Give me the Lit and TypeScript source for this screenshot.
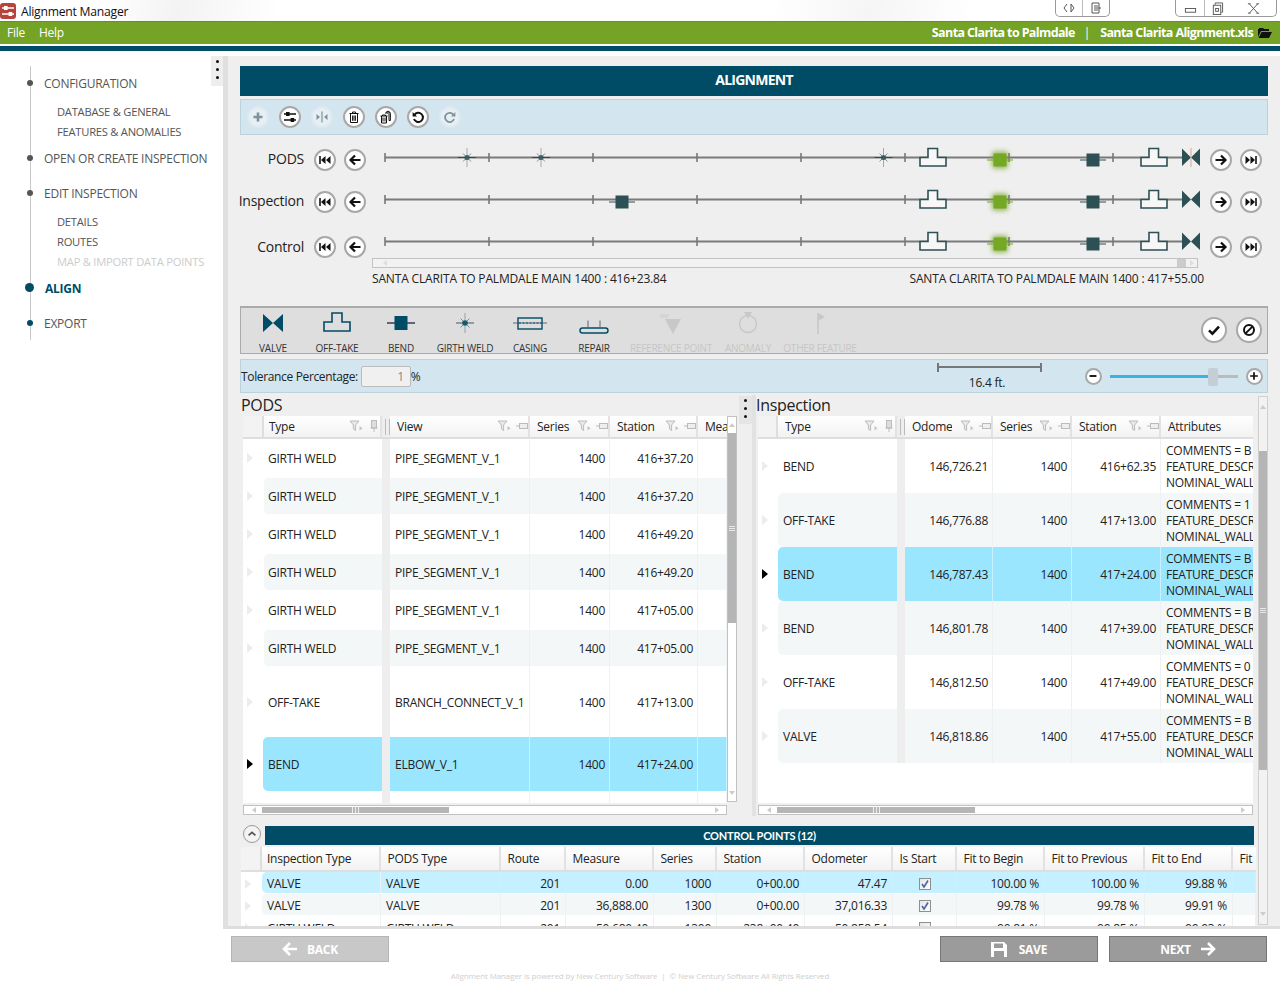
import { LitElement, html, css, svg } from "lit";
import { customElement } from "lit/decorators.js";

const DK = "#2d5055";
const TEAL = "#004c66";

const ticks = [385, 489, 593, 697, 801, 905, 1009, 1113];

const weld = (x: number, y: number, c = DK) => svg`
  <line x1=${x} y1=${y - 9.5} x2=${x} y2=${y + 9.5} stroke="#a8a8a6" stroke-width="1"/>
  <line x1=${x - 9} y1=${y} x2=${x + 9} y2=${y} stroke=${c} stroke-width="1"/>
  <line x1=${x - 4} y1=${y - 4} x2=${x + 4} y2=${y + 4} stroke="#7d9299" stroke-width="1"/>
  <line x1=${x + 4} y1=${y - 4} x2=${x - 4} y2=${y + 4} stroke="#7d9299" stroke-width="1"/>
  <circle cx=${x} cy=${y} r="2.6" fill=${c} opacity=".8"/>`;
const offtake = (x: number, c = DK) => svg`
  <path d="M${x} 24H${x + 26}V15.5H${x + 17.5}V6.5H${x + 8}V15.5H${x}Z" fill="#f7f7f7" stroke=${c} stroke-width="1.6"/>`;
const bend = (x: number, y = 18, c = "#2d5055") => svg`
  <line x1=${x - 13} y1=${y} x2=${x + 13} y2=${y} stroke=${c} stroke-width="1"/>
  <rect x=${x - 6.5} y=${y - 6.5} width="13" height="13" fill=${c}/>`;
const green = (x: number) => svg`
  <rect x=${x - 8} y="9.5" width="16" height="17" rx="3" fill="#75a325" opacity=".75" filter="url(#glow)"/>
  <line x1=${x - 13} y1="18" x2=${x + 13} y2="18" stroke="#86b33a" stroke-width="1.2"/>
  <rect x=${x - 6.5} y="11.5" width="13" height="13" fill="#75a825"/>`;
const valve = (x: number, c = DK) => svg`
  <path d="M${x} 6.5V24L${x + 9} 15.5L${x + 18} 24V6.5L${x + 9} 15.5Z" fill=${c}/>`;

const track = (extra: unknown) => html`<svg class="track" viewBox="378 0 826 30" width="826" height="30">
  <defs><filter id="glow" x="-60%" y="-60%" width="220%" height="220%"><feGaussianBlur stdDeviation="2.4"/></filter></defs>
  <line x1="385" y1="15.5" x2="1182" y2="15.5" stroke="#7a7a7a" stroke-width="2"/>
  ${ticks.map((t) => svg`<line x1=${t} y1="11" x2=${t} y2="20" stroke="#777" stroke-width="1.6"/>`)}
  ${offtake(920)}${green(1000)}${bend(1093)}${offtake(1141)}${valve(1182)}
  ${extra}
</svg>`;

const ic = (body: unknown, size = 14, color = "currentColor") =>
  html`<svg width=${size} height=${size} viewBox="0 0 14 14" fill="none" stroke=${color} stroke-width="1.4">${body}</svg>`;

const icons: Record<string, unknown> = {
  plus: svg`<path d="M7 2.5V11.5M2.5 7H11.5" stroke-width="2.6"/>`,
  sliders: svg`<path d="M1 4H13M1 10H13" stroke-width="1.4"/><rect x="3" y="2" width="3.6" height="4" fill="currentColor" stroke="none"/><rect x="7.6" y="8" width="3.6" height="4" fill="currentColor" stroke="none"/>`,
  split: svg`<path d="M7 1.5V12.5" stroke-width="1.2"/><path d="M1.5 4V10L5 7ZM12.5 4V10L9 7Z" fill="currentColor" stroke="none"/>`,
  trash: svg`<path d="M2.5 3.5H11.5M5.5 3.5V2H8.5V3.5M3.5 3.5V12.5H10.5V3.5M5.6 5.5V10.8M7 5.5V10.8M8.4 5.5V10.8" stroke-width="1"/>`,
  trash2: svg`<path d="M1.5 6H8.5M3.5 6V5H6.5V6M2.5 6V13H7.5V6M4 7.5V11.5M6 7.5V11.5" stroke-width="1"/><path d="M6 3H12M7.8 3V1.4H10.2V3M10 4V10.5H11.4V3.5" stroke-width="1"/>`,
  undo: svg`<path d="M3.4 5A4.6 4.6 0 1 1 3 9" stroke-width="2"/><path d="M1.6 2V6.4H6Z" fill="currentColor" stroke="none"/>`,
  redo: svg`<path d="M10.6 5A4.6 4.6 0 1 0 11 9" stroke-width="1.8"/><path d="M12.4 2V6.4H8Z" fill="currentColor" stroke="none"/>`,
  first: svg`<path d="M2 3V11" stroke-width="1.6"/><path d="M7.5 3V11L3 7ZM12.5 3V11L8 7Z" fill="currentColor" stroke="none"/>`,
  last: svg`<path d="M12 3V11" stroke-width="1.6"/><path d="M6.5 3V11L11 7ZM1.5 3V11L6 7Z" fill="currentColor" stroke="none"/>`,
  left: svg`<path d="M7 2.5L2.5 7L7 11.5M2.5 7H12.5" stroke-width="2.2"/>`,
  right: svg`<path d="M7 2.5L11.5 7L7 11.5M11.5 7H1.5" stroke-width="2.2"/>`,
  check: svg`<path d="M2 7.4L5.4 10.6L12 3.6" stroke-width="2.6"/>`,
  ban: svg`<circle cx="7" cy="7" r="5" stroke-width="2"/><path d="M3.6 10.4L10.4 3.6" stroke-width="2"/>`,
  minus: svg`<path d="M3 7H11" stroke-width="2.2"/>`,
  plusThin: svg`<path d="M7 2.5V11.5M2.5 7H11.5" stroke-width="2"/>`,
  up: svg`<path d="M3 8.6L7 5L11 8.6" stroke-width="2"/>`,
};

const cb = (name: string, cls = "") => html`<span class="cb ${cls}">${ic(icons[name])}</span>`;

const filterIc = html`<svg class="hi" width="14" height="12" viewBox="0 0 14 12"><path d="M1 1H10L6.6 5V10.5L4.4 9V5Z" fill="#e9e9e9" stroke="#bbb"/><path d="M10.5 6L13.5 8.2L10.5 10.5Z" fill="#c4c4c4"/></svg>`;
const pinH = html`<svg class="hi" width="12" height="12" viewBox="0 0 12 12"><path d="M0 6H3.5" stroke="#bbb"/><rect x="3.5" y="3.5" width="8" height="5" fill="#eee" stroke="#bbb"/></svg>`;
const pinV = html`<svg class="hi" width="12" height="12" viewBox="0 0 12 12"><rect x="3.5" y="0.5" width="5" height="7.5" fill="#ddd" stroke="#bbb"/><path d="M6 8V12M2.5 8H9.5" stroke="#bbb"/></svg>`;

const rowMark = (sel: boolean) =>
  html`<svg width="6" height="10" viewBox="0 0 6 10"><path d="M0 0L6 5L0 10Z" fill=${sel ? "#000" : "#ececec"}/></svg>`;

const vscroll = (thumbH: number, thumbTop: number) => html`<div class="vs">
  <svg class="sa" width="8" height="6" viewBox="0 0 8 6"><path d="M4 1L7 5H1Z" fill="#ccc"/></svg>
  <div class="vt" style="margin-top:${thumbTop}px;height:${thumbH}px"><i></i><i></i><i></i></div>
  <span class="fill"></span>
  <svg class="sa" width="8" height="6" viewBox="0 0 8 6"><path d="M4 5L7 1H1Z" fill="#ccc"/></svg>
</div>`;

const hscroll = (w: number, t: number, cls = "") => html`<div class="hs ${cls}">
  <svg class="ha" width="6" height="8" viewBox="0 0 6 8"><path d="M1 4L5 1V7Z" fill="#ccc"/></svg>
  <div class="ht" style="width:${w}px;margin-left:${t}px"><i></i><i></i><i></i></div>
  <span class="fill"></span>
  <svg class="ha" width="6" height="8" viewBox="0 0 6 8"><path d="M5 4L1 1V7Z" fill="#ccc"/></svg>
</div>`;

const LCOLS = "21px 118px 8px 140px 80px 88px 29px";
const RCOLS = "20px 119px 8px 88px 79px 89px 92px";
const CCOLS = "21px 119px 120px 65px 88px 63px 88px 88px 64px 88px 100px 88px 23px";

const leftRows = [
  ["GIRTH WELD", "PIPE_SEGMENT_V_1", "1400", "416+37.20", 38],
  ["GIRTH WELD", "PIPE_SEGMENT_V_1", "1400", "416+37.20", 38],
  ["GIRTH WELD", "PIPE_SEGMENT_V_1", "1400", "416+49.20", 38],
  ["GIRTH WELD", "PIPE_SEGMENT_V_1", "1400", "416+49.20", 38],
  ["GIRTH WELD", "PIPE_SEGMENT_V_1", "1400", "417+05.00", 38],
  ["GIRTH WELD", "PIPE_SEGMENT_V_1", "1400", "417+05.00", 38],
  ["OFF-TAKE", "BRANCH_CONNECT_V_1", "1400", "417+13.00", 70],
  ["BEND", "ELBOW_V_1", "1400", "417+24.00", 54],
];
const rightRows = [
  ["BEND", "146,726.21", "1400", "416+62.35", "B"],
  ["OFF-TAKE", "146,776.88", "1400", "417+13.00", "1"],
  ["BEND", "146,787.43", "1400", "417+24.00", "B"],
  ["BEND", "146,801.78", "1400", "417+39.00", "B"],
  ["OFF-TAKE", "146,812.50", "1400", "417+49.00", "0"],
  ["VALVE", "146,818.86", "1400", "417+55.00", "B"],
];
const ctrlHead = ["Inspection Type", "PODS Type", "Route", "Measure", "Series", "Station", "Odometer", "Is Start", "Fit to Begin", "Fit to Previous", "Fit to End", "Fit"];
const ctrlRows: (string | boolean)[][] = [
  ["VALVE", "VALVE", "201", "0.00", "1000", "0+00.00", "47.47", true, "100.00 %", "100.00 %", "99.88 %", ""],
  ["VALVE", "VALVE", "201", "36,888.00", "1300", "0+00.00", "37,016.33", true, "99.78 %", "99.78 %", "99.91 %", ""],
  ["GIRTH WELD", "GIRTH WELD", "201", "50,680.40", "1300", "238+00.40", "50,858.54", false, "99.81 %", "99.85 %", "99.93 %", ""],
];

const palette: { label: string; w: number; off?: boolean; icon: unknown }[] = [
  { label: "VALVE", w: 64, icon: svg`<path d="M10 3V21L20 12L30 21V3L20 12Z" fill=${TEAL}/>` },
  { label: "OFF-TAKE", w: 64, icon: svg`<path d="M7 20H33V11H25V2H15V11H7Z" fill="none" stroke=${TEAL} stroke-width="1.6"/>` },
  { label: "BEND", w: 64, icon: svg`<path d="M6 12H34" stroke="#113" stroke-width="1.2"/><rect x="13.5" y="5" width="13" height="14" fill=${TEAL}/>` },
  { label: "GIRTH WELD", w: 64, icon: svg`<path d="M20 2V22" stroke="#8fa6ad"/><path d="M11 12H29" stroke="#456"/><path d="M15.5 7.5L24.5 16.5M24.5 7.5L15.5 16.5" stroke="#7d9299"/><circle cx="20" cy="12" r="2.8" fill=${TEAL} opacity=".85"/>` },
  { label: "CASING", w: 66, icon: svg`<path d="M3 12H37" stroke="#667"/><rect x="8" y="7" width="24" height="11" fill="none" stroke=${TEAL} stroke-width="1.4"/><path d="M9 12H31" stroke=${TEAL} stroke-dasharray="2 1.5"/>` },
  { label: "REPAIR", w: 62, icon: svg`<rect x="6" y="17" width="28" height="5" rx="2.5" fill="none" stroke=${TEAL} stroke-width="1.4"/><path d="M14 9.5V17M26 9.5V17" stroke="#567"/>` },
  { label: "REFERENCE POINT", w: 92, off: true, icon: svg`<path d="M14 8H30L22 23Z" fill="#c8c8c8"/><text x="9" y="7" font-size="6" fill="#c8c8c8" font-family="Open Sans">SM</text>` },
  { label: "ANOMALY", w: 62, off: true, icon: svg`<circle cx="20" cy="13" r="8.5" fill="none" stroke="#c8c8c8" stroke-width="1.4"/><path d="M16 1H24L20 8Z" fill="#c8c8c8"/>` },
  { label: "OTHER FEATURE", w: 82, off: true, icon: svg`<path d="M18 2V23" stroke="#c8c8c8" stroke-width="1.6"/><path d="M18 2L25 6L18 10Z" fill="#c8c8c8"/>` },
];

@customElement("app-root")
export class AppRoot extends LitElement {
  static styles = css`
    :host {
      display: block;
      width: 1280px;
      height: 984px;
      overflow: hidden;
      background: #fff;
      font-family: "Open Sans", "Noto Sans", sans-serif;
      font-size: 11.5px;
      letter-spacing: -0.25px;
      color: #222;
      --alt: #f3f7f8;
      --sel: #9be6ff;
      --sel2: #c5f0ff;
      --teal: #004c66;
    }
    * { box-sizing: border-box; }
    svg { display: block; flex: none; overflow: visible; }
    .page { display: flex; flex-direction: column; height: 984px; }
    .fill { flex: 1; }

    .title { height: 21px; display: flex; align-items: flex-start; position: relative; background: linear-gradient(100deg, #fff 8%, #f3f3f3 14%, #fff 22%, #fff 60%, #f5f5f5 68%, #fff 76%); }
    .appicon { width: 16px; height: 16px; margin-top: 3px; border-radius: 3px; background: #b5453c; color: #fff; display: flex; align-items: center; justify-content: center; }
    .apptext { margin: 3.5px 0 0 5px; font-size: 12.2px; color: #111; line-height: 16px; }
    .wgroup { height: 17px; border: 1px solid #999; border-top: 0; border-radius: 0 0 5px 5px; display: flex; background: #fff; color: #555; }
    .wgroup span { display: flex; align-items: center; justify-content: center; height: 16px; }
    .wgroup span + span { border-left: 1px solid #bbb; }
    .wg1 { margin-left: auto; width: 55px; }
    .wg1 span { flex: 1; }
    .wg2 { margin: 0 3px 0 65px; width: 102px; }
    .wg2 span:nth-child(1) { width: 28px; }
    .wg2 span:nth-child(2) { width: 26px; }
    .wg2 span:nth-child(3) { flex: 1; border-left: 0; }

    .menu { height: 23px; background: #75a325; border-top: 1px solid #777; display: flex; align-items: center; color: #fff; font-size: 12px; padding: 0 8px 2px 7px; }
    .menu .m2 { margin-left: 14px; }
    .menu b { font-weight: 700; font-size: 12.5px; letter-spacing: -0.62px; }
    .menu .bar { margin: 0 10px 0 9px; }
    .menu .folder { margin-left: 5px; }
    .stripe { height: 5px; background: var(--teal); margin-top: 2px; }
    .whitegap { height: 5px; }

    .main { flex: none; height: 873px; display: flex; }
    .side { width: 223px; flex: none; position: relative; padding: 10px 0 0 30px; background: #fff; }
    .grip { position: absolute; right: 0; top: 0; width: 12px; height: 30px; background: #eee; display: flex; flex-direction: column; align-items: center; gap: 5px; padding-top: 4px; }
    .grip i { width: 3px; height: 3px; border-radius: 50%; background: #111; }
    .nav { height: 274px; border-left: 1.5px solid #c8c8c8; padding-top: 9px; color: #555; }
    .nav .h { position: relative; display: block; font-size: 12px; line-height: 17px; height: 17px; padding-left: 13px; white-space: nowrap; }
    .nav .h::before { content: ""; position: absolute; left: -4.5px; top: 5px; width: 6px; height: 6px; border-radius: 50%; background: #555; }
    .nav .s { display: block; font-size: 11.2px; line-height: 20px; height: 20px; padding-left: 26px; white-space: nowrap; }
    .nav .dim { color: #ccc; }
    .nav .g1 { margin-top: 10px; }
    .nav .gap1 { margin-top: 8px; }
    .nav .gap2 { margin-top: 18px; }
    .nav .cur { font-weight: 700; color: var(--teal); padding-left: 14px; }
    .nav .cur::before { left: -6px; top: 3px; width: 9px; height: 9px; background: var(--teal); }
    .nav .exp { margin-top: 18px; }
    .nav .exp::before { background: var(--teal); }
    .split { width: 5px; flex: none; background: #e0e0e0; }

    .content { flex: 1; min-width: 0; background: #efefef; padding: 10px 12px 0; display: flex; flex-direction: column; position: relative; border-bottom: 3px solid #ddd; }
    .head { height: 30px; flex: none; background: var(--teal); color: #fff; font-weight: 700; font-size: 14px; letter-spacing: -0.75px; display: flex; align-items: center; justify-content: center; padding-bottom: 3px; }
    .tools { height: 36px; flex: none; margin-top: 3px; background: #d3e6ef; border: 1px solid #bdd3dc; display: flex; align-items: center; gap: 10px; padding-left: 6px; }
    .cb { width: 22px; height: 22px; flex: none; border-radius: 50%; border: 2px solid #a8a8a8; background: #fff; color: #111; display: flex; align-items: center; justify-content: center; }
    .cb.off { border-color: #dde9ef; background: #e6eff4; color: #7f929b; }
    .cb.big { width: 26px; height: 26px; }
    .cb.sm { width: 17px; height: 17px; border-width: 2px; }
    .cb.sm svg { width: 12px; height: 12px; }

    .timeline { height: 171px; flex: none; padding-top: 7px; }
    .row { display: flex; height: 30px; align-items: flex-start; margin-bottom: 12px; }
    .row .lab { width: 64px; margin-top: 7px; text-align: right; font-size: 14px; line-height: 20px; white-space: nowrap; color: #222; direction: rtl; }
    .row .cb { margin-top: 7px; }
    .row .b1 { margin-left: 10px; }
    .row .b2 { margin-left: 8px; }
    .row .track { margin-left: 12px; }
    .row .b3 { margin-left: 6px; }
    .row .b4 { margin-left: 8px; }
    .row.r3 { margin-bottom: 2px; }
    .row.r3 .cb { margin-top: 10px; }
    .row.r3 .lab { margin-top: 11px; }
    .tscroll { margin-left: 132px; width: 826px; height: 10px; border: 1px solid #c2c2c2; background: #f2f2f2; display: flex; align-items: center; padding: 0 2px 0 9px; }
    .tgrip { width: 9px; height: 8px; background: #ccc; margin-right: 3px; }
    .tcap { margin-left: 132px; width: 832px; display: flex; justify-content: space-between; font-size: 12px; line-height: 20px; margin-top: 1px; color: #222; letter-spacing: -0.16px; }

    .palette { height: 48px; flex: none; background: #dedede; border: 1px solid #aaa; border-width: 2px 1px 1px; display: flex; align-items: flex-start; }
    .pi { display: flex; flex-direction: column; align-items: center; flex: none; color: #333; font-size: 10px; line-height: 12px; white-space: nowrap; padding-top: 3px; }
    .pi svg { margin-bottom: 7px; }
    .pi.off { color: #c6c6c6; }
    .pacts { margin-left: auto; display: flex; gap: 9px; padding: 9px 5px 0 0; }

    .tol { height: 34px; flex: none; margin-top: 5px; background: #d3e6ef; border: 1px solid #bdd3dc; display: flex; align-items: center; font-size: 12px; color: #222; }
    .tol .lb { letter-spacing: -0.35px; }
    .tol .inp { width: 50px; height: 21px; margin-left: 3px; background: #f0f0f0; border: 1px solid #bbb; border-radius: 2px; text-align: right; padding: 0 6px; line-height: 19px; color: #888; }
    .scale { margin-left: 516px; width: 105px; text-align: center; }
    .sbar { height: 9px; border-left: 2px solid #777; border-right: 2px solid #777; position: relative; margin-top: 2px; }
    .sbar::before { content: ""; position: absolute; left: 0; right: 0; top: 3px; height: 2px; background: #777; }
    .scale .t { line-height: 16px; margin-top: 3px; padding-right: 4px; }
    .slider { display: flex; align-items: center; margin-left: 43px; }
    .strack { width: 128px; height: 3px; margin: 0 8px; background: #bbb; position: relative; }
    .strack i { position: absolute; left: 0; top: 0; bottom: 0; width: 98px; background: #3ab3e3; }
    .strack b { position: absolute; left: 98px; top: -7px; width: 10px; height: 18px; border-radius: 2px; background: #c5ced4; }

    .bottom { flex: 1; min-height: 0; margin-top: 2px; margin-left: 1px; display: flex; overflow: hidden; }
    .bl { width: 1015px; flex: none; display: flex; flex-direction: column; min-height: 0; }
    .panes { height: 421px; flex: none; display: flex; }
    .pane { display: flex; flex-direction: column; }
    .pane.l { width: 498px; padding-left: 2px; }
    .pane.r { width: 499px; padding-left: 2px; }
    .ptitle { height: 21px; font-size: 16px; line-height: 21px; letter-spacing: -0.3px; margin-left: -2px; color: #222; white-space: nowrap; }
    .pgrip { width: 13px; height: 28px; margin-top: 1px; background: #e5e5e5; display: flex; flex-direction: column; align-items: center; gap: 5px; padding-top: 3px; flex: none; }
    .pgrip i { width: 3px; height: 3px; border-radius: 50%; background: #111; }
    .pstrip { width: 4px; height: 421px; flex: none; background: #e2e2e2; }
    .gridwrap { display: flex; height: 387px; }
    .grid { display: flex; flex-direction: column; background: #fff; overflow: hidden; }
    .gh { display: grid; height: 23px; flex: none; background: linear-gradient(#fff, #f2f2f2); border-bottom: 2px solid #dedede; }
    .gh > div { display: flex; align-items: center; padding: 0 0 1px 7px; gap: 5px; border-right: 2px solid #e2e2e2; min-width: 0; overflow: hidden; font-size: 12px; color: #222; white-space: nowrap; }
    .gh > div:last-child { padding-right: 0; border-right: 0; }
    .cp .gh > div { padding-left: 6.5px; }
    .pane.l .gh > div:nth-child(2), .cp .gh > div:nth-child(2) { padding-left: 5px; }
    .gh .tx { flex: 1; min-width: 0; overflow: hidden; }
    .gh .tx.clipped { margin-right: 3px; }
    .gh .ind { background: #f3f3f3; border-right: 2px solid #dedede; padding: 0; }
    .gh .sp { border-right: 0; padding: 0 0 0 3px; background: #eee; }
    .gh .sp::before { content: ""; width: 3px; height: 16px; border-left: 1px solid #bbb; border-right: 1px solid #bbb; }
    .gr { display: grid; flex: none; }
    .gr > div { display: flex; align-items: center; padding: 0 5px 0 5px; border-right: 1px solid #eef1f1; white-space: nowrap; overflow: hidden; font-size: 12px; color: #222; background: var(--bg, transparent); background-clip: padding-box; }
    .gr.gap > div { border-top: 1px solid transparent; border-bottom: 1px solid transparent; }
    .gr > .ind { background: #fff; border: 0 !important; padding: 0 0 0 4px; }
    .gr > .sp { background: #eee; border: 0 !important; padding: 0; }
    .gr > .ty { padding-left: 4px; border-right: 0; border-radius: 5px 0 0 5px; }
    .pane.r .gr > .ty { padding-left: 5px; }
    .pane.l .gr.sel > .ty { margin-left: -1px; padding-left: 5px; }
    .gr > .rt { justify-content: flex-end; padding-right: 4px; }
    .gr > .at { display: block; line-height: 16px; padding: 4px 0 0 5px; border-right: 0; }
    .gr.alt { --bg: var(--alt); }
    .gr.sel { --bg: var(--sel); }
    .gr.sel > div { border-right-color: #c9f1ff; }
    .gr.fillr { flex: 1; }
    .vs { width: 10px; flex: none; border: 1px solid #c2c2c2; background: #fff; display: flex; flex-direction: column; align-items: center; padding: 5px 0; height: 386px; }
    .sa { flex: none; }
    .vt { width: 8px; background: #b5b5b5; flex: none; display: flex; flex-direction: column; align-items: center; justify-content: center; gap: 1px; }
    .vt i { width: 6px; height: 1px; background: #e8e8e8; }
    .hs { height: 10px; margin-top: 2px; width: 484px; border: 1px solid #c2c2c2; background: #fff; display: flex; align-items: center; padding: 0 6px 0 7px; }
    .hs.w2 { width: 495px; }
    .ht { height: 6px; background: #b5b5b5; flex: none; display: flex; align-items: center; justify-content: center; gap: 2px; }
    .ht i { width: 1px; height: 6px; background: #eee; }

    .cphead { flex: none; display: flex; height: 20px; margin-top: 9px; align-items: flex-start; }
    .cphead .cb { margin-left: 2px; width: 18px; height: 18px; background: #f3f3f3; border: 1.5px solid #999; color: #555; }
    .cphead .cb svg { width: 12px; height: 12px; }
    .cpbar { margin: 1px 0 0 4px; width: 989px; height: 19px; background: var(--teal); color: #fff; font-family: Lato, "Open Sans", sans-serif; font-weight: 700; font-size: 11px; letter-spacing: -0.2px; display: flex; align-items: center; justify-content: center; padding-bottom: 1px; }
    .cp { margin-top: 2px; flex: 1; min-height: 0; display: flex; flex-direction: column; background: #fff; overflow: hidden; }
    .cp .gh { height: 25px; }
    .cp .gr { height: 22px; }
    .cp .gr.sel { --bg: var(--sel2); }
    .cp .gr > div { padding-top: 2px; }
    .cp .gr.alt > div, .cp .gr.sel > div { border-bottom: 1px solid #fff; }
    .cp .gr > .ty { padding-left: 5px; border-right: 1px solid #eef1f1; border-radius: 5px 0 0 5px; }
    .cp .gr > div { padding-right: 5px; }
    .cp .gr > .cc { justify-content: center; }
    .chk { width: 12px; height: 12px; border: 1px solid #8e8f8f; background: linear-gradient(135deg, #e6e6e6, #fff); display: flex; align-items: center; justify-content: center; }
    .outer { width: 10px; margin-left: 2px; flex: none; height: 529px; margin-top: 1px; border: 1px solid #cfcfcf; background: #f2f2f2; display: flex; flex-direction: column; align-items: center; padding: 7px 0; }

    .foot { flex: 1; display: flex; flex-direction: column; }
    .btns { display: flex; padding: 7px 13px 0 231px; gap: 11px; }
    .btn { width: 158px; height: 26px; border: 1px solid #767676; background: #9b9b9b; color: #fff; font-weight: 700; font-size: 12px; display: flex; align-items: center; justify-content: center; gap: 9px; }
    .btn.dis { background: #c8c8c8; border-color: #b5b5b5; margin-right: auto; }
    .credit { margin-top: 8px; text-align: center; font-size: 8px; line-height: 12px; color: #cfcfcf; letter-spacing: -0.12px; }
  `;

  private headCell(label: string, pin: unknown, noIcons = false) {
    return html`<div><span class="tx ${label === "Odometer" && !noIcons ? "clipped" : ""}">${label}</span>${noIcons ? "" : html`${filterIc}${pin}`}</div>`;
  }

  render() {
    return html`<div class="page">
      <div class="title">
        <span class="appicon">${ic(icons.sliders, 14, "#fff")}</span>
        <span class="apptext">Alignment Manager</span>
        <div class="wgroup wg1">
          <span>${ic(svg`<path d="M5 3L2 7L5 11M9 3L12 7L9 11Z" stroke-width="1"/>`, 14)}</span>
          <span>${ic(svg`<path d="M3 2H10V12H3ZM5 5H9M5 7H12M5 9H9" stroke-width="1"/>`, 14)}</span>
        </div>
        <div class="wgroup wg2">
          <span>${ic(svg`<rect x="1.5" y="7" width="11" height="4" stroke-width="1"/>`, 13)}</span>
          <span>${ic(svg`<rect x="2.5" y="3.5" width="8" height="10" stroke-width="1"/><path d="M4.5 3V1H12.5V11H11" stroke-width="1"/><rect x="5" y="7" width="3" height="3" stroke-width="1"/>`, 13)}</span>
          <span>${ic(svg`<path d="M2.5 2L11.5 12M11.5 2L2.5 12M4 2H1M13 2H10M4 12H1M13 12H10" stroke-width="1"/>`, 13)}</span>
        </div>
      </div>
      <div class="menu">
        <span>File</span><span class="m2">Help</span><span class="fill"></span>
        <b>Santa Clarita to Palmdale</b><span class="bar">|</span><b>Santa Clarita Alignment.xls</b>
        <svg class="folder" width="14" height="11" viewBox="0 0 14 11"><path d="M0 2H1V1H5L6 2H11V4H3L0 10Z" fill="#111"/><path d="M3.6 5H14L11 11H0.6Z" fill="#111"/></svg>
      </div>
      <div class="stripe"></div>
      <div class="whitegap"></div>
      <div class="main">
        <div class="side">
          <div class="grip"><i></i><i></i><i></i></div>
          <div class="nav">
            <span class="h">CONFIGURATION</span>
            <span class="s g1">DATABASE &amp; GENERAL</span>
            <span class="s">FEATURES &amp; ANOMALIES</span>
            <span class="h gap1">OPEN OR CREATE INSPECTION</span>
            <span class="h gap2">EDIT INSPECTION</span>
            <span class="s g1">DETAILS</span>
            <span class="s">ROUTES</span>
            <span class="s dim">MAP &amp; IMPORT DATA POINTS</span>
            <span class="h cur gap1">ALIGN</span>
            <span class="h exp">EXPORT</span>
          </div>
        </div>
        <div class="split"></div>
        <div class="content">
          <div class="head">ALIGNMENT</div>
          <div class="tools">
            ${cb("plus", "off")}${cb("sliders")}${cb("split", "off")}${cb("trash")}${cb("trash2")}${cb("undo")}${cb("redo", "off")}
          </div>
          <div class="timeline">
            ${this.tlRow("PODS", svg`${weld(467, 15.5)}${weld(541, 15.5)}${weld(883.5, 15.5)}<line x1="1191" y1="6" x2="1191" y2="25" stroke="#d7a58d"/>`)}
            ${this.tlRow("Inspection", bend(622, 18))}
            ${this.tlRow("Control", "", "r3")}
            <div class="tscroll">
              <svg width="6" height="8" viewBox="0 0 6 8"><path d="M1 4L5 1V7Z" fill="#ddd"/></svg>
              <span class="fill"></span><span class="tgrip"></span>
              <svg width="6" height="8" viewBox="0 0 6 8"><path d="M5 4L1 1V7Z" fill="#ddd"/></svg>
            </div>
            <div class="tcap"><span>SANTA CLARITA TO PALMDALE MAIN 1400 : 416+23.84</span><span>SANTA CLARITA TO PALMDALE MAIN 1400 : 417+55.00</span></div>
          </div>
          <div class="palette">
            ${palette.map((p) => html`<div class="pi ${p.off ? "off" : ""}" style="width:${p.w}px">
              <svg width="40" height="24" viewBox="0 0 40 24">${p.icon}</svg>${p.label}</div>`)}
            <div class="pacts">${cb("check", "big")}${cb("ban", "big")}</div>
          </div>
          <div class="tol">
            <span class="lb">Tolerance Percentage:</span><span class="inp">1</span><span>%</span>
            <div class="scale"><div class="sbar"></div><div class="t">16.4 ft.</div></div>
            <div class="slider">${cb("minus", "sm")}<div class="strack"><i></i><b></b></div>${cb("plusThin", "sm")}</div>
          </div>
          <div class="bottom">
            <div class="bl">
              <div class="panes">
                <div class="pane l">
                  <div class="ptitle">PODS</div>
                  <div class="gridwrap">
                    <div class="grid" style="width:484px">
                      <div class="gh" style="grid-template-columns:${LCOLS}">
                        <div class="ind"></div>
                        ${this.headCell("Type", pinV)}
                        <div class="sp"></div>
                        ${this.headCell("View", pinH)}${this.headCell("Series", pinH)}${this.headCell("Station", pinH)}${this.headCell("Measure", "", true)}
                      </div>
                      ${leftRows.map((r, i) => this.leftRow(r, i))}
                      <div class="gr fillr" style="grid-template-columns:${LCOLS}"><div class="ind"></div><div style="border-right:0"></div><div class="sp"></div><div></div><div></div><div></div><div></div></div>
                    </div>
                    ${vscroll(190, 5)}
                  </div>
                  ${hscroll(187, 5)}
                </div>
                <div class="pgrip"><i></i><i></i><i></i></div>
                <div class="pstrip"></div>
                <div class="pane r">
                  <div class="ptitle">Inspection</div>
                  <div class="gridwrap">
                    <div class="grid" style="width:495px">
                      <div class="gh" style="grid-template-columns:${RCOLS}">
                        <div class="ind"></div>
                        ${this.headCell("Type", pinV)}
                        <div class="sp"></div>
                        ${this.headCell("Odometer", pinH)}${this.headCell("Series", pinH)}${this.headCell("Station", pinH)}${this.headCell("Attributes", "", true)}
                      </div>
                      ${rightRows.map((r, i) => this.rightRow(r, i))}
                    </div>
                  </div>
                  ${hscroll(198, 5, "w2")}
                </div>
              </div>
              <div class="cphead">
                ${cb("up")}
                <div class="cpbar">CONTROL POINTS (12)</div>
              </div>
              <div class="cp">
                <div class="gh" style="grid-template-columns:${CCOLS}">
                  <div class="ind"></div>
                  ${ctrlHead.map((h) => this.headCell(h, "", true))}
                </div>
                ${ctrlRows.map((r, i) => html`<div class="gr ${i === 0 ? "sel" : i === 1 ? "alt" : ""}" style="grid-template-columns:${CCOLS}">
                  <div class="ind">${rowMark(false)}</div>
                  ${r.map((v, c) => typeof v === "boolean"
                    ? html`<div class="cc"><span class="chk">${v ? html`<svg width="10" height="10" viewBox="0 0 10 10"><path d="M2 5L4 8L8 1.5" fill="none" stroke="#4a62a8" stroke-width="1.6"/></svg>` : ""}</span></div>`
                    : html`<div class="${c === 0 ? "ty" : c > 1 ? "rt" : ""}">${v}</div>`)}
                </div>`)}
              </div>
            </div>
            <div class="outer">
              <svg class="sa" width="8" height="6" viewBox="0 0 8 6"><path d="M4 1L7 5H1Z" fill="#ccc"/></svg>
              <div class="vt" style="margin-top:41px;height:319px"><i></i><i></i><i></i></div>
              <span class="fill"></span>
              <svg class="sa" width="8" height="6" viewBox="0 0 8 6"><path d="M4 5L7 1H1Z" fill="#ccc"/></svg>
            </div>
          </div>
        </div>
      </div>
      <div class="foot">
        <div class="btns">
          <div class="btn dis"><svg width="16" height="14" viewBox="0 0 16 14"><path d="M8 1L2 7L8 13M2 7H15" fill="none" stroke="#fff" stroke-width="2.6"/></svg>BACK</div>
          <div class="btn"><svg width="16" height="15" viewBox="0 0 16 15"><path d="M0 0H13L16 3V15H0ZM3 1.5V6H12V1.5ZM3 9V15H13V9Z" fill="#fff" fill-rule="evenodd"/></svg>&nbsp;SAVE</div>
          <div class="btn">NEXT<svg width="16" height="14" viewBox="0 0 16 14"><path d="M8 1L14 7L8 13M14 7H1" fill="none" stroke="#fff" stroke-width="2.6"/></svg></div>
        </div>
        <div class="credit">Alignment Manager is powered by New Century Software &nbsp;|&nbsp; © New Century Software All Rights Reserved</div>
      </div>
    </div>`;
  }

  private tlRow(label: string, extra: unknown, cls = "") {
    return html`<div class="row ${cls}">
      <span class="lab">${label}</span>
      <span class="b1">${cb("first")}</span><span class="b2">${cb("left")}</span>
      ${track(extra)}
      <span class="b3">${cb("right")}</span><span class="b4">${cb("last")}</span>
    </div>`;
  }

  private leftRow(r: (string | number)[], i: number) {
    const sel = i === 7;
    const cls = sel ? "sel" : i % 2 === 1 && i < 6 ? "alt" : "";
    return html`<div class="gr ${cls} ${r[4] === 38 ? "gap" : ""}" style="grid-template-columns:${LCOLS};height:${r[4]}px">
      <div class="ind">${rowMark(sel)}</div>
      <div class="ty">${r[0]}</div>
      <div class="sp"></div>
      <div>${r[1]}</div>
      <div class="rt">${r[2]}</div>
      <div class="rt">${r[3]}</div>
      <div></div>
    </div>`;
  }

  private rightRow(r: string[], i: number) {
    const sel = i === 2;
    const cls = sel ? "sel" : i % 2 === 1 ? "alt" : "";
    return html`<div class="gr ${cls}" style="grid-template-columns:${RCOLS};height:54px">
      <div class="ind">${rowMark(sel)}</div>
      <div class="ty">${r[0]}</div>
      <div class="sp"></div>
      <div class="rt">${r[1]}</div>
      <div class="rt">${r[2]}</div>
      <div class="rt">${r[3]}</div>
      <div class="at">COMMENTS = ${r[4]}<br />FEATURE_DESCR<br />NOMINAL_WALL</div>
    </div>`;
  }
}
